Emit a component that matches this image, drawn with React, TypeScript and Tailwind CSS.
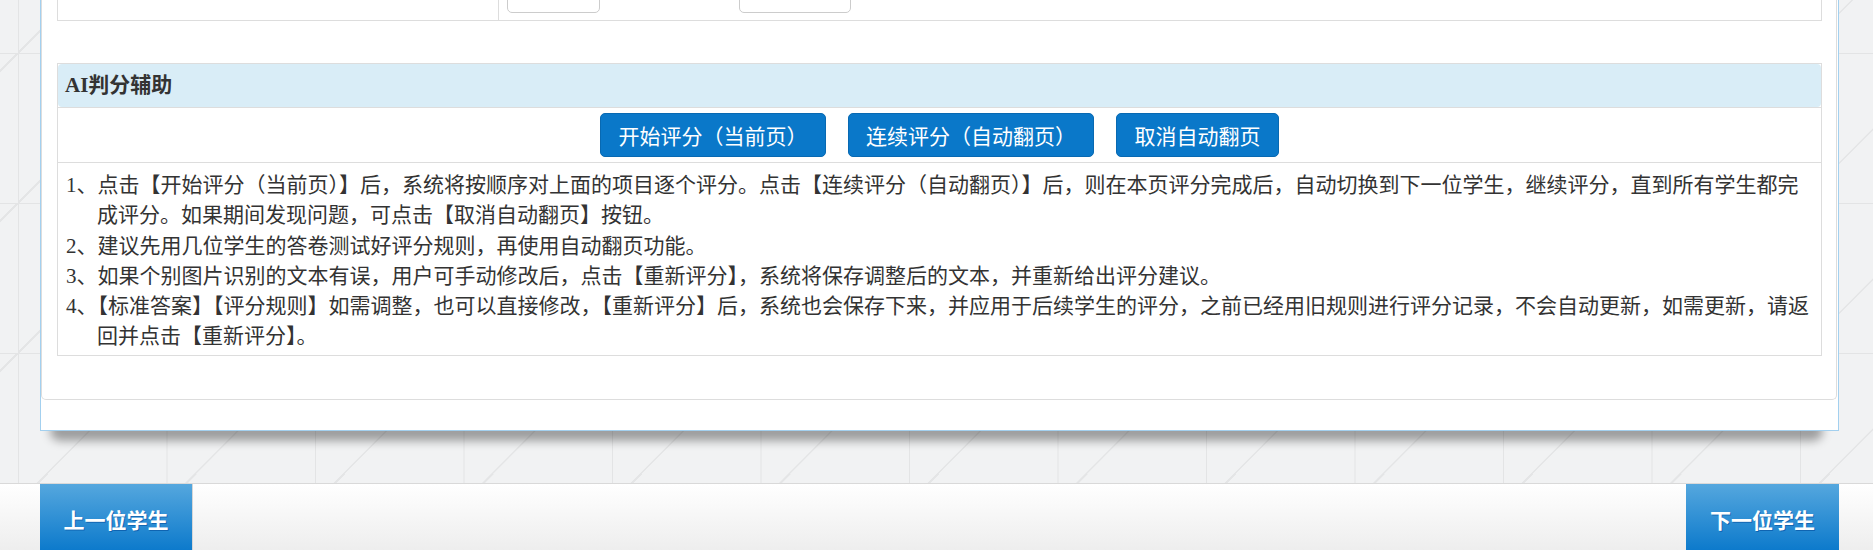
import React from "react";

const serifCjk = "font-['Liberation_Serif','Noto_Sans_CJK_SC',serif]";

export default function App() {
  const items: string[][] = [
    [
      "1、点击【开始评分（当前页）】后，系统将按顺序对上面的项目逐个评分。点击【连续评分（自动翻页）】后，则在本页评分完成后，自动切换到下一位学生，继续评分，直到所有学生都完",
      "成评分。如果期间发现问题，可点击【取消自动翻页】按钮。",
    ],
    ["2、建议先用几位学生的答卷测试好评分规则，再使用自动翻页功能。"],
    ["3、如果个别图片识别的文本有误，用户可手动修改后，点击【重新评分】，系统将保存调整后的文本，并重新给出评分建议。"],
    [
      "4、【标准答案】【评分规则】如需调整，也可以直接修改，【重新评分】后，系统也会保存下来，并应用于后续学生的评分，之前已经用旧规则进行评分记录，不会自动更新，如需更新，请返",
      "回并点击【重新评分】。",
    ],
  ];

  return (
    <div className="h-[550px] w-[1873px] overflow-hidden flex flex-col bg-[#f1f2f3] bg-[linear-gradient(to_right,#e3e4e5_1px,transparent_1px),linear-gradient(to_bottom,#e3e4e5_1px,transparent_1px),linear-gradient(to_bottom_right,transparent_49.6%,#e4e5e6_49.6%,#e4e5e6_50.4%,transparent_50.4%)] bg-[length:148.5px_150px] bg-[position:18px_53px]">
      {/* main panel */}
      <div className="relative z-10 ml-[40px] w-[1799px] shrink-0 border-x border-b border-[#a3d0ef] bg-white pb-[30px]">
        <div className="mr-[1px] border-x border-b border-[#dddddd] rounded-b-[5px] pl-[15px] pr-[14px] pb-[43px]">
          {/* top table row (cut off) */}
          <div className="h-[21px] flex border-x border-b border-[#dddddd]">
            <div className="w-[441px] border-r border-[#dddddd]" />
            <div className="flex items-end pb-[7px]">
              <div className="ml-[8px] w-[93px] h-[40px] shrink-0 border border-[#cccccc] rounded-[5px] bg-white" />
              <div className="ml-[139px] w-[112px] h-[45px] shrink-0 border border-[#cccccc] rounded-[5px] bg-white flex items-center justify-center text-[16px] text-[#666] font-['Noto_Sans_CJK_SC',sans-serif]">
                修改
              </div>
            </div>
          </div>

          {/* AI section */}
          <div className="mt-[42px] border border-[#dddddd] text-[#333333]">
            <div className={`h-[43px] rounded-[4px] bg-[#d9edf7] flex items-center pl-[7px] text-[21px] font-bold ${serifCjk}`}>
              AI判分辅助
            </div>
            <div className="h-[56px] border-y border-[#dddddd] flex items-center justify-center gap-[22px] font-['Noto_Sans_CJK_SC',sans-serif] text-[21px] text-white">
              <button className="w-[226px] h-[44px] rounded-[5px] bg-[#0a78c9] border border-[#0869b2] leading-none">
                开始评分（当前页）
              </button>
              <button className="w-[246px] h-[44px] rounded-[5px] bg-[#0a78c9] border border-[#0869b2] leading-none">
                连续评分（自动翻页）
              </button>
              <button className="w-[163px] h-[44px] rounded-[5px] bg-[#0a78c9] border border-[#0869b2] leading-none">
                取消自动翻页
              </button>
            </div>
            <div className={`h-[192px] pt-[7px] text-[21px] leading-[30.3px] ${serifCjk}`}>
              {items.map((lines, i) => (
                <div key={i} className="pl-[39px] indent-[-31px] whitespace-nowrap">
                  {lines.map((l, j) => (
                    <React.Fragment key={j}>
                      {j > 0 && <br />}
                      {l}
                    </React.Fragment>
                  ))}
                </div>
              ))}
            </div>
          </div>
        </div>
      </div>

      {/* shadow under panel */}
      <div className="-mt-[10px] mx-[50px] h-[20px] shrink-0 rounded-[12px] bg-black/35 blur-[5px]" />

      {/* bottom nav bar */}
      <div className="mt-[42px] h-[73px] shrink-0 border-t border-[#d9d9d9] bg-[linear-gradient(to_bottom,#ffffff,#ececec)] flex justify-between pl-[40px] pr-[34px]">
        <button className="w-[153px] h-[72px] border-r border-[#d6d6d6] bg-[linear-gradient(to_bottom,#55a7de,#0676ca)] text-white text-[21px] font-bold font-['Noto_Sans_CJK_SC',sans-serif] [text-shadow:1px_1px_0_rgba(0,70,150,0.55)]">
          上一位学生
        </button>
        <button className="w-[153px] h-[72px] bg-[linear-gradient(to_bottom,#55a7de,#0676ca)] text-white text-[21px] font-bold font-['Noto_Sans_CJK_SC',sans-serif] [text-shadow:1px_1px_0_rgba(0,70,150,0.55)]">
          下一位学生
        </button>
      </div>
    </div>
  );
}
